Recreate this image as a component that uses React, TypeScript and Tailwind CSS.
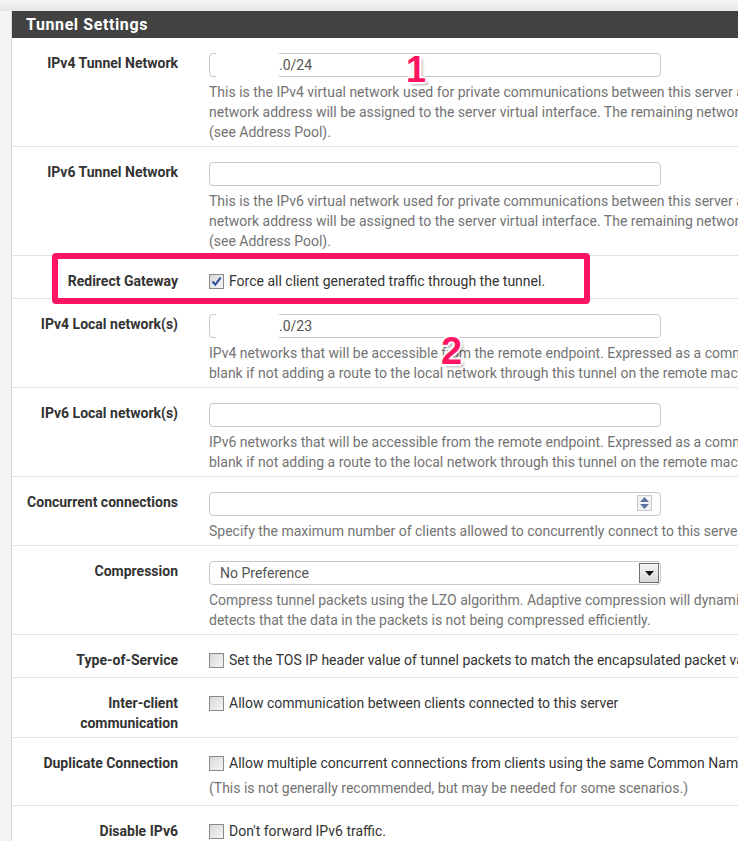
import type { ReactNode } from 'react'

const font = { fontFamily: 'Roboto, "Liberation Sans", sans-serif' }

const markStyle = {
  fontFamily: '"Liberation Sans", Arial, sans-serif',
  textShadow:
    '0 0 2px #fff, 2px 0 0 #fff, -2px 0 0 #fff, 0 2px 0 #fff, 0 -2px 0 #fff, 1px 1px 0 #fff, -1px -1px 0 #fff, 1px -1px 0 #fff, -1px 1px 0 #fff, 3px 3px 3px rgba(0,0,0,0.3)',
}

function Check({ checked }: { checked?: boolean }) {
  return (
    <span className="inline-flex h-[15px] w-[15px] shrink-0 items-center justify-center border border-[#8a8a8a] bg-gradient-to-br from-[#d8d8d8] to-[#f6f6f6]">
      {checked && (
        <svg width="11" height="11" viewBox="0 0 11 11">
          <path d="M1.5 5.5 L4.3 8.6 L9.6 1.6" fill="none" stroke="#2c4f9f" strokeWidth="2" />
        </svg>
      )}
    </span>
  )
}

function Field({ value, masked, children }: { value?: string; masked?: boolean; children?: ReactNode }) {
  return (
    <div className="relative h-[24px] w-[452px] rounded-[4px] border border-[#c8c8c8] bg-white">
      <span className={`block leading-[22px] text-[#555] ${masked ? 'pl-[69px]' : 'pl-[10px]'}`}>{value}</span>
      {/* redacted part of the address */}
      {masked && <span className="absolute left-[6px] top-[-2px] h-[25px] w-[63px] bg-white" />}
      {children}
    </div>
  )
}

function Help({ children }: { children: ReactNode }) {
  return <div className="mt-[5px] whitespace-nowrap leading-[20px] text-[#737373]">{children}</div>
}

function CheckLine({ checked, children }: { checked?: boolean; children: ReactNode }) {
  return (
    <div className="flex items-center gap-[5px] whitespace-nowrap leading-[20px] text-[#333]">
      <Check checked={checked} />
      <span>{children}</span>
    </div>
  )
}

function Row({ label, check, children }: { label: ReactNode; check?: boolean; children: ReactNode }) {
  return (
    <div className="grid grid-cols-[182px_1fr] border-b border-[#e2e2e2] pb-[4px] pt-[15px]">
      <div className="pr-[16px] text-right font-bold leading-[20px] text-[#333]">{label}</div>
      <div className={`pl-[15px] ${check ? 'pb-[3px]' : ''}`}>{children}</div>
    </div>
  )
}

export default function App() {
  return (
    <div className="relative h-[841px] w-[738px] overflow-hidden bg-[#f4f4f4] text-[14px]" style={font}>
      <div className="h-[11px] bg-gradient-to-b from-[#f4f4f4] to-[#e6e6e6]" />
      <div className="ml-[11px] w-[1100px] border-l border-[#dadada] bg-white">
        <div className="h-[27px] bg-[#424242] pl-[14px] text-[16px] font-bold leading-[27px] tracking-[0.6px] text-white">
          Tunnel Settings
        </div>

        <Row label="IPv4 Tunnel Network">
          <Field value=".0/24" masked />
          <Help>
            This is the IPv4 virtual network used for private communications between this server and client hosts expressed using CIDR (e.g. 10.0.8.0/24). The first
            <br />
            network address will be assigned to the server virtual interface. The remaining network addresses can optionally be assigned to connecting clients
            <br />
            (see Address Pool).
          </Help>
        </Row>

        <Row label="IPv6 Tunnel Network">
          <Field />
          <Help>
            This is the IPv6 virtual network used for private communications between this server and client hosts expressed using CIDR (e.g. fe80::/64). The first
            <br />
            network address will be assigned to the server virtual interface. The remaining network addresses can optionally be assigned to connecting clients
            <br />
            (see Address Pool).
          </Help>
        </Row>

        <Row label="Redirect Gateway" check>
          <CheckLine checked>Force all client generated traffic through the tunnel.</CheckLine>
        </Row>

        <Row label="IPv4 Local network(s)">
          <Field value=".0/23" masked />
          <Help>
            IPv4 networks that will be accessible from the remote endpoint. Expressed as a comma-separated list of one or more CIDR ranges. This may be left
            <br />
            blank if not adding a route to the local network through this tunnel on the remote machine. This is generally set to the LAN network.
          </Help>
        </Row>

        <Row label="IPv6 Local network(s)">
          <Field />
          <Help>
            IPv6 networks that will be accessible from the remote endpoint. Expressed as a comma-separated list of one or more IP/PREFIX. This may be left
            <br />
            blank if not adding a route to the local network through this tunnel on the remote machine. This is generally set to the LAN network.
          </Help>
        </Row>

        <Row label="Concurrent connections">
          <Field>
            <span className="absolute right-[8px] top-[2px] flex h-[16px] w-[15px] flex-col items-center justify-center gap-[2px] border border-[#c9c9c9] bg-[#f3f3f3]">
              <svg width="9" height="5" viewBox="0 0 9 5">
                <path d="M0 5 L4.5 0 L9 5 Z" fill="#5f72a0" />
              </svg>
              <svg width="9" height="5" viewBox="0 0 9 5">
                <path d="M0 0 L9 0 L4.5 5 Z" fill="#5f72a0" />
              </svg>
            </span>
          </Field>
          <Help>Specify the maximum number of clients allowed to concurrently connect to this server.</Help>
        </Row>

        <Row label="Compression">
          <Field value="No Preference">
            <span className="absolute right-[1px] top-[1px] flex h-[20px] w-[20px] items-center justify-center border border-[#6f6f6f] bg-gradient-to-b from-[#f4f4f4] to-[#d9d9d9]">
              <svg width="9" height="5" viewBox="0 0 9 5">
                <path d="M0 0 L9 0 L4.5 5 Z" fill="#111" />
              </svg>
            </span>
          </Field>
          <Help>
            Compress tunnel packets using the LZO algorithm. Adaptive compression will dynamically disable compression for a period of time if OpenVPN
            <br />
            detects that the data in the packets is not being compressed efficiently.
          </Help>
        </Row>

        <Row label="Type-of-Service" check>
          <CheckLine>Set the TOS IP header value of tunnel packets to match the encapsulated packet value.</CheckLine>
        </Row>

        <Row label="Inter-client communication" check>
          <CheckLine>Allow communication between clients connected to this server</CheckLine>
        </Row>

        <Row label="Duplicate Connection" check>
          <CheckLine>Allow multiple concurrent connections from clients using the same Common Name.</CheckLine>
          <Help>(This is not generally recommended, but may be needed for some scenarios.)</Help>
        </Row>

        <Row label="Disable IPv6" check>
          <CheckLine>Don't forward IPv6 traffic.</CheckLine>
        </Row>
      </div>

      {/* annotations drawn over the page */}
      <div className="absolute left-[52px] top-[253px] h-[51px] w-[538px] rounded-[4px] border-[6px] border-[#ff1462]" />
      <span className="absolute left-[406px] top-[52px] text-[36px] font-bold leading-none text-[#ff1462]" style={markStyle}>
        1
      </span>
      <span className="absolute left-[441px] top-[332px] text-[38px] font-bold leading-none text-[#ff1462]" style={markStyle}>
        2
      </span>
    </div>
  )
}
